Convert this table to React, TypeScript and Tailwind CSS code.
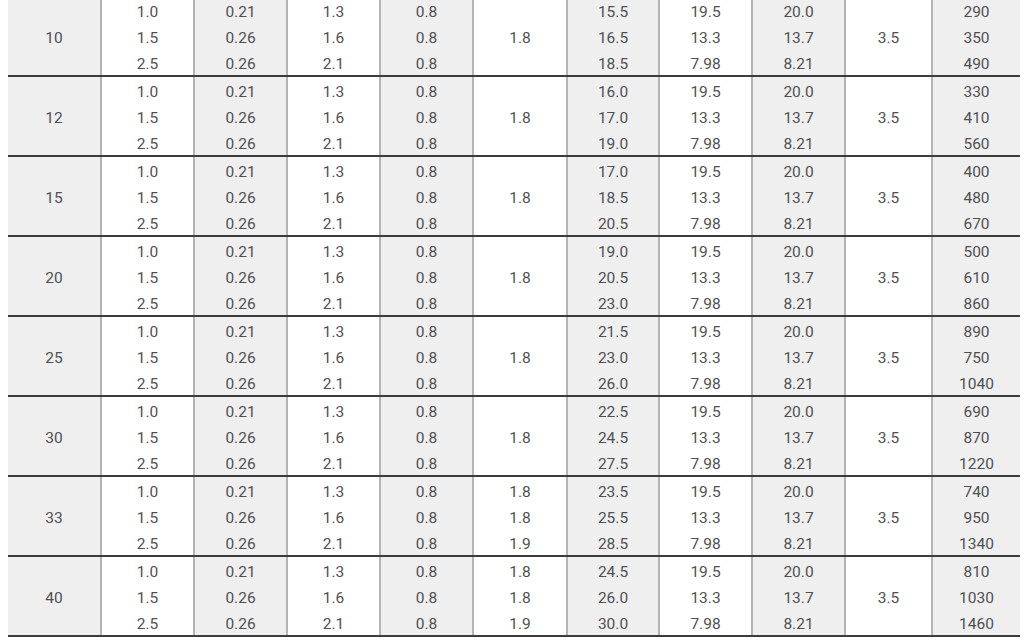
import React from "react";

type Group = {
  size: string;
  c5: string[] | string;
  c6: string[];
  c10: string[];
};

const groups: Group[] = [
  { size: "10", c5: "1.8", c6: ["15.5", "16.5", "18.5"], c10: ["290", "350", "490"] },
  { size: "12", c5: "1.8", c6: ["16.0", "17.0", "19.0"], c10: ["330", "410", "560"] },
  { size: "15", c5: "1.8", c6: ["17.0", "18.5", "20.5"], c10: ["400", "480", "670"] },
  { size: "20", c5: "1.8", c6: ["19.0", "20.5", "23.0"], c10: ["500", "610", "860"] },
  { size: "25", c5: "1.8", c6: ["21.5", "23.0", "26.0"], c10: ["890", "750", "1040"] },
  { size: "30", c5: "1.8", c6: ["22.5", "24.5", "27.5"], c10: ["690", "870", "1220"] },
  { size: "33", c5: ["1.8", "1.8", "1.9"], c6: ["23.5", "25.5", "28.5"], c10: ["740", "950", "1340"] },
  { size: "40", c5: ["1.8", "1.8", "1.9"], c6: ["24.5", "26.0", "30.0"], c10: ["810", "1030", "1460"] },
];

const Cell: React.FC<{ value: string[] | string; gray?: boolean; width: string; last?: boolean }> = ({
  value,
  gray,
  width,
  last,
}) => {
  const bg = gray ? "bg-[#efeff0]" : "bg-white";
  const border = last ? "" : "border-r-2 border-[#b4b4b4]";
  if (typeof value === "string") {
    return (
      <div className={`${width} ${bg} ${border} flex items-center justify-center pt-[5px] leading-none`}>
        {value}
      </div>
    );
  }
  return (
    <div className={`${width} ${bg} ${border} flex flex-col`}>
      {value.map((v, i) => (
        <div key={i} className="flex-1 min-h-0 flex items-center justify-center pt-[5px] leading-none">
          {v}
        </div>
      ))}
    </div>
  );
};

export default function App() {
  return (
    <div className="w-[1024px] h-[644px] bg-white overflow-hidden">
      <div
        className="-mt-[3px] ml-2 w-[1012px] text-[15.5px] text-[#505050]"
        style={{ fontFamily: "Roboto, 'Noto Sans', sans-serif" }}
      >
        {groups.map((g) => (
          <div key={g.size} className="flex h-[80px] border-b-2 border-[#3c3c3c]">
            <Cell value={g.size} gray width="w-[94px]" />
            <Cell value={["1.0", "1.5", "2.5"]} width="w-[93px]" />
            <Cell value={["0.21", "0.26", "0.26"]} gray width="w-[93px]" />
            <Cell value={["1.3", "1.6", "2.1"]} width="w-[93px]" />
            <Cell value={["0.8", "0.8", "0.8"]} gray width="w-[93px]" />
            <Cell value={g.c5} width="w-[94px]" />
            <Cell value={g.c6} gray width="w-[92px]" />
            <Cell value={["19.5", "13.3", "7.98"]} width="w-[93px]" />
            <Cell value={["20.0", "13.7", "8.21"]} gray width="w-[93px]" />
            <Cell value="3.5" width="w-[87px]" />
            <Cell value={g.c10} gray width="w-[87px]" last />
          </div>
        ))}
      </div>
    </div>
  );
}
